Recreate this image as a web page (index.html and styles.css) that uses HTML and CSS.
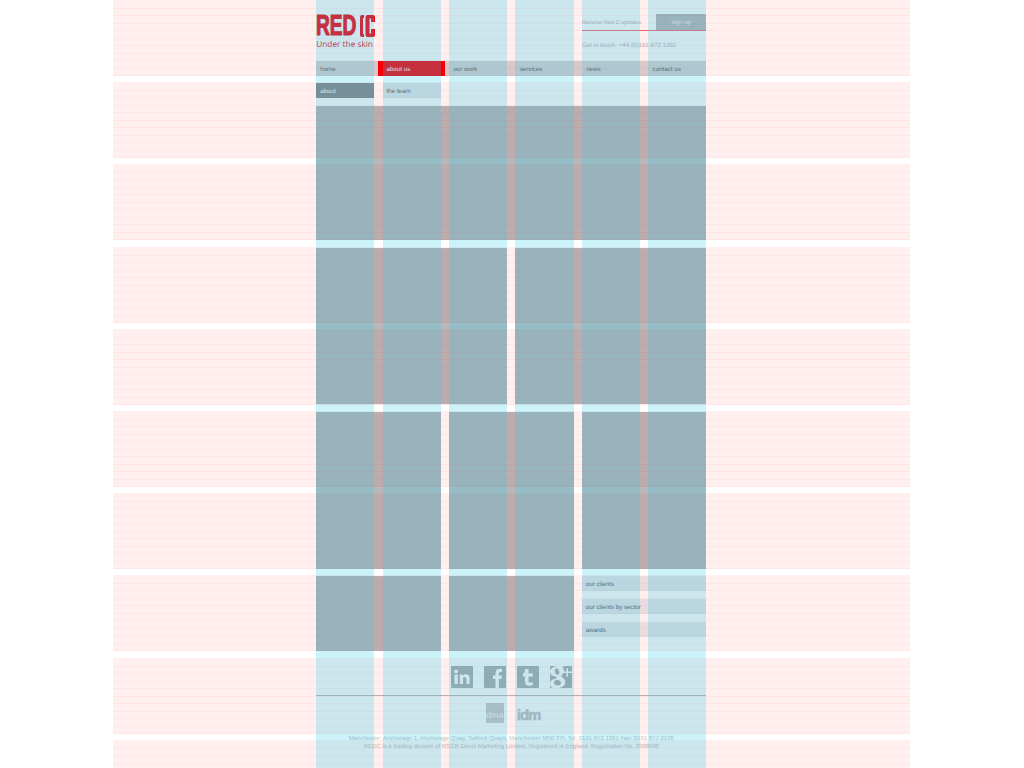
FILE: index.html
```html
<!DOCTYPE html>
<html lang="en">
<head>
  <meta charset="UTF-8" />
  <title>REDC - About us</title>
  <link rel="stylesheet" href="styles.css">
</head>
<body>
  <div class="page">
    <header class="site-header">
      <a class="logo">
        <span class="logo-mark"><span class="logo-red">RED</span><svg class="logo-c" viewBox="0 0 17 22" width="17" height="22"><path d="M2 2q0-2 2-2h2v3H5v16h1v3H4q-2 0-2-2zM7.500 2q0-2 2-2h5.500q2 0 2 2v5h-4V3.500h-1.500v15H13V14h4v6q0 2-2 2H9.500q-2 0-2-2z" fill="#f5000e"/></svg></span>
        <span class="logo-tag">Under the skin</span>
      </a>
      <div class="header-side">
        <form class="signup">
          <span class="signup-label">Receive Red C updates</span>
          <span class="signup-btn">sign up</span>
        </form>
        <p class="touch">Get in touch: +44 (0)161 872 1361</p>
      </div>
    </header>

    <nav class="main-nav">
      <a class="nav-item nav-first">home</a>
      <a class="nav-item nav-active">about us</a>
      <a class="nav-item">our work</a>
      <a class="nav-item">services</a>
      <a class="nav-item">news</a>
      <a class="nav-item nav-last">contact us</a>
    </nav>

    <nav class="sub-nav">
      <a class="sub-item sub-active">about</a>
      <a class="sub-item">the team</a>
    </nav>

    <section class="block-row row-hero"><div class="block"></div></section>
    <section class="block-row row-two"><div class="block"></div><div class="block"></div></section>
    <section class="block-row row-three"><div class="block"></div><div class="block"></div><div class="block"></div></section>
    <section class="block-row row-last">
      <div class="block"></div>
      <div class="block"></div>
      <ul class="side-list">
        <li>our clients</li>
        <li>our clients by sector</li>
        <li>awards</li>
      </ul>
    </section>

    <div class="social">
      <svg viewBox="0 0 22 22" width="22" height="22"><rect width="22" height="22" rx="1" fill="#a8aeb0"/><path d="M3.500 8.500h3.300V18H3.500zM5.150 3.500a1.900 1.900 0 1 1 0 3.800 1.900 1.900 0 0 1 0-3.800zM8.800 8.500H12v1.400c.6-1 1.700-1.700 3.100-1.700 2.600 0 3.600 1.600 3.600 4.300V18h-3.300v-5c0-1.300-.4-2-1.500-2-1.200 0-1.800.8-1.800 2.100V18H8.800z" fill="#fff"/></svg>
      <svg viewBox="0 0 22 22" width="22" height="22"><rect width="22" height="22" rx="1" fill="#a8aeb0"/><path d="M11.500 22v-9H9V9.500h2.500V7c0-2.800 1.600-4.300 4.100-4.300h2.400V6h-1.600c-1.200 0-1.500.6-1.500 1.500v2h3l-.5 3.500h-2.500v9z" fill="#fff"/></svg>
      <svg viewBox="0 0 22 22" width="22" height="22"><rect width="22" height="22" rx="1" fill="#a8aeb0"/><path d="M8 3h3.500v4.200h4.300v3.300h-4.300v4.300c0 1.300.6 1.800 1.700 1.800.9 0 1.800-.2 2.600-.6V19c-1 .5-2.200.8-3.500.8-2.900 0-4.300-1.600-4.300-4.300v-5H5.800V8C7.300 7.400 7.900 5.400 8 3z" fill="#fff"/></svg>
      <svg viewBox="0 0 22 22" width="22" height="22"><rect width="22" height="22" rx="1" fill="#a8aeb0"/><path d="M8 0h6l-1.500 1.500c1 .8 1.600 2.200 1.600 3.600 0 1.900-.9 3-2.200 4-.8.600-.9 1.400 0 2.100 1.900 1.300 3.400 2.400 3.400 4.800 0 3.400-3 6-7.300 6H2.500C1 21 0 19.500 0 17.500c0-3 3-4.600 6.700-4.700-.6-.8-.7-1.500-.3-2.200C3 10.700 0 8.800 0 5.800 0 2.500 4 0 8 0zM6.400 2.200c-1.300 0-1.800 1.300-1.500 3.200.3 2 1.400 3.300 2.700 3.300s1.900-1.400 1.600-3.300c-.3-1.900-1.400-3.200-2.800-3.200zM7.800 13.700c-2.400 0-3.800 1.100-3.800 2.800 0 1.700 1.400 2.900 3.600 2.900 2.100 0 3.400-1 3.400-2.600 0-1.300-1-2.100-3.200-3.100zM16.500 2H18v3.500H22V7h-4v3.500h-1.500V7H13V5.500h3.500z" fill="#fff"/></svg>
    </div>

    <div class="accred">
      <span class="dma"><span class="dma-name">dma</span></span>
      <span class="idm">idm</span>
    </div>

    <footer class="site-footer">
      <p>Manchester: Anchorage 1, Anchorage Quay, Salford Quays, Manchester M50 3YL Tel: 0161 872 1361 Fax: 0161 877 2126</p>
      <p>REDC is a trading division of RSCR Direct Marketing Limited. Registered in England. Registration No. 2908698</p>
    </footer>
  </div>

  <!-- design grid laid over the page -->
  <div class="grid-overlay rows">
    <i></i><i></i><i></i><i></i><i></i><i></i><i></i><i></i><i></i><i></i>
  </div>
  <div class="grid-overlay cols">
    <i></i><i></i><i></i><i></i><i></i><i></i>
  </div>
</body>
</html>
```

FILE: styles.css
```css
html, body {
  margin: 0;
  padding: 0;
  height: 768px;
  overflow: hidden;
  background: #fff;
}
body {
  font-family: "Liberation Sans", Arial, sans-serif;
  text-rendering: geometricPrecision;
  position: relative;
}
p, ul {
  margin: 0;
  padding: 0;
}

.page {
  width: 390.2px;
  margin-left: 316.2px;
  height: 768px;
  overflow: hidden;
}

/* header */
.site-header {
  height: 61px;
  display: flex;
  justify-content: space-between;
}
.logo {
  display: block;
  width: 60px;
  padding-top: 15px;
}
.logo-mark {
  display: flex;
  height: 22px;
}
.logo-red {
  display: block;
  width: 42px;
  height: 21px;
  margin-top: 1px;
  font: bold 29px/21px "Liberation Sans", sans-serif;
  color: #f5000e;
  -webkit-text-stroke: 1.2px #f5000e;
  transform: scaleX(0.66);
  transform-origin: left center;
  white-space: nowrap;
}
.logo-tag {
  display: block;
  margin-top: 2px;
  font-family: "Open Sans", sans-serif;
  font-size: 8.3px;
  line-height: 12px;
  color: #f01020;
  white-space: nowrap;
}
.header-side {
  width: 124.5px;
  padding-top: 14px;
}
.signup {
  display: flex;
  justify-content: space-between;
  height: 16px;
  border-bottom: 1px solid #f0707a;
}
.signup-label {
  font-size: 5.6px;
  line-height: 18px;
  color: #bcb8b8;
  white-space: nowrap;
}
.signup-btn {
  width: 50.5px;
  background: #b8b8ba;
  color: #f2f2f2;
  font-size: 6.2px;
  line-height: 17px;
  text-align: center;
}
.touch {
  margin-top: 9px;
  font-size: 6.2px;
  line-height: 11px;
  color: #bcb8b8;
  white-space: nowrap;
}

/* nav */
.main-nav {
  display: flex;
  height: 15px;
  background: #d6d6d8;
}
.nav-item {
  width: 66.4px;
  box-sizing: border-box;
  padding-left: 8px;
  font-size: 6.2px;
  line-height: 17px;
  color: #5a5a5a;
}
.nav-first {
  width: 62.3px;
  padding-left: 4px;
}
.nav-active {
  width: 66.9px;
  background: #f50008;
  color: #fff;
}
.nav-last {
  width: 58.3px;
}
.sub-nav {
  display: flex;
  gap: 8.3px;
  margin-top: 7px;
}
.sub-item {
  width: 58.1px;
  height: 15px;
  box-sizing: border-box;
  padding-left: 4px;
  background: #e7ebee;
  font-size: 6.2px;
  line-height: 17px;
  color: #5a5a5a;
}
.sub-active {
  background: #88888a;
  color: #fff;
}

/* grey blocks */
.block-row {
  display: flex;
  gap: 8.3px;
}
.block {
  flex: 1;
  background: #b8b8ba;
}
.row-hero {
  height: 134px;
  margin-top: 8px;
}
.row-two {
  height: 156px;
  margin-top: 8px;
}
.row-three {
  height: 157px;
  margin-top: 8px;
}
.row-last {
  height: 75px;
  margin-top: 7px;
}
.side-list {
  flex: 1;
  list-style: none;
}
.side-list li {
  height: 15px;
  margin-bottom: 7.75px;
  padding-left: 4px;
  background: #e7ebee;
  font-size: 6.2px;
  line-height: 17px;
  color: #5a5a5a;
}

/* footer bits */
.social {
  display: flex;
  justify-content: center;
  gap: 11px;
  margin-top: 15px;
  padding-bottom: 7px;
  border-bottom: 1px solid #bcb8b8;
}
.accred {
  display: flex;
  justify-content: center;
  align-items: flex-end;
  gap: 13px;
  height: 20px;
  margin-top: 7px;
  padding-left: 4px;
}
.dma {
  display: block;
  width: 18px;
  height: 20px;
  background: #ccc8c8;
}
.dma-name {
  display: block;
  padding-top: 8px;
  color: #f8f8f8;
  font-size: 8.8px;
  line-height: 9px;
  text-align: center;
}
.idm {
  width: 24px;
  font: bold 15px/14px "Liberation Sans", sans-serif;
  letter-spacing: -1px;
  color: #c4c0c0;
  -webkit-text-stroke: 0.5px #c4c0c0;
}
.site-footer {
  margin-top: 13px;
  text-align: center;
  font-size: 6px;
  line-height: 7.5px;
  color: #c4c0c0;
  white-space: nowrap;
}

/* grid overlay */
.grid-overlay {
  position: absolute;
  top: 0;
  pointer-events: none;
}
.rows {
  left: 113px;
  width: 797px;
  height: 768px;
  overflow: hidden;
}
.rows i {
  display: block;
  height: 76px;
  margin-bottom: 6.2px;
  background-color: rgba(255, 0, 0, 0.064);
  background-image: repeating-linear-gradient(to bottom, transparent 0, transparent 6.5px, rgba(255, 0, 0, 0.045) 6.5px, rgba(255, 0, 0, 0.045) 7.5px);
  background-position: 0 1px;
}
.cols {
  left: 316.2px;
  width: 390.2px;
  height: 768px;
  display: flex;
  gap: 8.3px;
}
.cols i {
  flex: 1;
  background: rgba(40, 200, 235, 0.24);
}
```
